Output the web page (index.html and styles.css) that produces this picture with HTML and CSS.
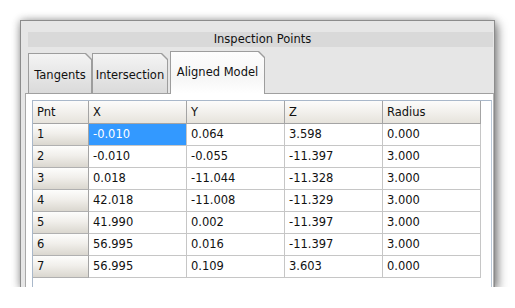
FILE: index.html
```html
<!DOCTYPE html>
<html lang="en">
<head>
  <meta charset="UTF-8" />
  <title>Inspection Points</title>
  <link rel="stylesheet" href="styles.css">
</head>
<body>

<div class="window">
  <div class="title">Inspection Points</div>

  <div class="tabbar">
    <div class="tab tab-tangents"><span>Tangents</span></div>
    <div class="tab tab-intersection"><span>Intersection</span></div>
    <div class="tab tab-aligned active"><span>Aligned Model</span></div>
  </div>

  <div class="panel">
    <div class="grid-frame">
      <table class="grid">
        <thead>
          <tr>
            <th class="col-pnt">Pnt</th>
            <th>X</th>
            <th>Y</th>
            <th>Z</th>
            <th>Radius</th>
          </tr>
        </thead>
        <tbody>
          <tr><th>1</th><td class="selected">-0.010</td><td>0.064</td><td>3.598</td><td>0.000</td></tr>
          <tr><th>2</th><td>-0.010</td><td>-0.055</td><td>-11.397</td><td>3.000</td></tr>
          <tr><th>3</th><td>0.018</td><td>-11.044</td><td>-11.328</td><td>3.000</td></tr>
          <tr><th>4</th><td>42.018</td><td>-11.008</td><td>-11.329</td><td>3.000</td></tr>
          <tr><th>5</th><td>41.990</td><td>0.002</td><td>-11.397</td><td>3.000</td></tr>
          <tr><th>6</th><td>56.995</td><td>0.016</td><td>-11.397</td><td>3.000</td></tr>
          <tr><th>7</th><td>56.995</td><td>0.109</td><td>3.603</td><td>0.000</td></tr>
        </tbody>
      </table>
    </div>
  </div>
</div>

</body>
</html>
```

FILE: styles.css
```css
body {
  margin: 0;
  background: #ffffff;
  font-family: "DejaVu Sans", Verdana, sans-serif;
  font-size: 11.5px;
  color: #111;
}
.window {
  margin: 20px 0 0 20px;
  width: 475px;
  height: 267px;
  box-sizing: border-box;
  background: #e6e6e6;
  border: 1px solid #8c8c8c;
  border-bottom: none;
  box-shadow: 0 0 8px rgba(0,0,0,0.3), 3px 4px 10px rgba(0,0,0,0.4);
  overflow: hidden;
}
.title {
  margin: 11px 1px 0 7px;
  height: 15px;
  line-height: 15px;
  background: #d9d9d9;
  text-align: center;
  padding-left: 4px;
}
.tabbar {
  display: flex;
  align-items: flex-end;
  margin: 4px 0 0 7px;
  position: relative;
  z-index: 1;
}
.tab {
  height: 40px;
  box-sizing: border-box;
  padding: 1px 1px 0 1px;
  background: #9d9d9d;
  clip-path: polygon(0 0, calc(100% - 6px) 0, 100% 6px, 100% 100%, 0 100%);
}
.tab span {
  display: flex;
  align-items: center;
  justify-content: center;
  height: 100%;
  background: linear-gradient(#f4f4f4, #dadada);
  clip-path: polygon(0 0, calc(100% - 6px) 0, 100% 6px, 100% 100%, 0 100%);
  padding-top: 2px;
  box-sizing: border-box;
}
.tab-tangents {
  width: 64px;
}
.tab-intersection {
  width: 76px;
  margin-right: 2px;
}
.tab-aligned {
  width: 95px;
}
.tab.active {
  height: 43px;
  margin-bottom: -1px;
}
.tab.active span {
  background: linear-gradient(#fdfdfd, #f6f6f6 60%, #ffffff);
  padding-top: 0;
  padding-bottom: 2px;
}
.panel {
  margin-left: 4px;
  height: 200px;
  background: #ffffff;
  border-top: 1px solid #a0a0a0;
  border-left: 1px solid #a8a8a8;
  border-right: 1px solid #b4b4b4;
}
.grid-frame {
  margin: 6px 1px 0 6px;
  height: 200px;
  border: 1px solid #a9b8ca;
  border-right-color: #b9c7d6;
}
.grid {
  border-collapse: separate;
  border-spacing: 0;
  table-layout: fixed;
  width: 448px;
}
.grid th, .grid td {
  box-sizing: border-box;
  width: 98px;
  height: 22px;
  padding: 0 4px;
  line-height: 21px;
  text-align: left;
  font-weight: normal;
  white-space: nowrap;
  border-right: 1px solid #c6c6c6;
  border-bottom: 1px solid #c6c6c6;
}
.grid thead th {
  height: 23px;
  line-height: 22px;
  background: linear-gradient(#fcfcfb, #f2f0ec 50%, #e6e3dc);
  border-right-color: #a4a4a4;
  border-bottom-color: #a4a4a4;
}
.grid th.col-pnt {
  width: 56px;
}
.grid tbody th {
  background: linear-gradient(#fdfdfc, #f1efeb 45%, #dad7cf);
  border-right-color: #a4a4a4;
  border-bottom-color: #b0b0b0;
}
.grid td.selected {
  background: #3399ff;
  color: #ffffff;
}
```
